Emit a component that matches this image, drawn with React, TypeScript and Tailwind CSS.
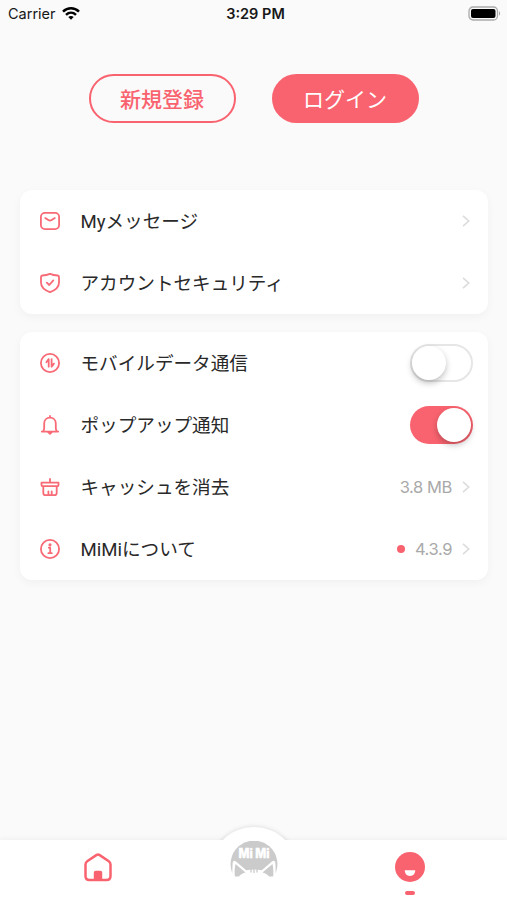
import type { ReactNode } from "react"

function Icon({ children }: { children: ReactNode }) {
  return (
    <svg
      viewBox="0 0 20 20"
      className="h-5 w-5 shrink-0"
      fill="none"
      stroke="#f86a76"
      strokeWidth="1.8"
      strokeLinecap="round"
      strokeLinejoin="round"
    >
      {children}
    </svg>
  )
}

const icons = {
  message: (
    <Icon>
      <rect x="0.9" y="1.9" width="18.2" height="16.2" rx="4" />
      <path d="M5.2 7.1l3.1 2c1.1.7 2.3.7 3.4 0l3.1-2" />
    </Icon>
  ),
  shield: (
    <Icon>
      <path d="M10 0.9C7.2 2 4.3 2.4 2.4 2.5c-.9.1-1.4.6-1.4 1.5v5.6c0 4.7 3.6 7.7 9 9.6 5.4-1.9 9-4.9 9-9.6V4c0-.9-.5-1.4-1.4-1.5C15.7 2.4 12.8 2 10 .9z" />
      <path d="M6.8 9.6l2.5 2.4 4-4.6" />
    </Icon>
  ),
  data: (
    <Icon>
      <circle cx="10" cy="10" r="9.1" />
      <path d="M8.7 6.1v7.6M8.5 6.3L6.4 9.2M11.6 6.1v7.6M11.8 13.5l2.1-2.9" />
    </Icon>
  ),
  bell: (
    <Icon>
      <path d="M10 .9v1.6M1.8 16.6h16.4M3.1 16.3c.8-1.1 1.1-2.1 1.1-3.4V8.6c0-3.5 2.3-5.9 5.8-5.9s5.8 2.4 5.8 5.9v4.3c0 1.3.3 2.3 1.1 3.4" />
      <path d="M8.4 17.4h3.2L10 18.9z" fill="#f86a76" />
    </Icon>
  ),
  clean: (
    <Icon>
      <path d="M10 1.9v3.2M1.5 5.6h17v2.3c0 .8-.5 1.3-1.3 1.3H2.8c-.8 0-1.3-.5-1.3-1.3zM3.3 9.4v6.5c0 1.5.7 2.2 2.2 2.2h9c1.5 0 2.2-.7 2.2-2.2V9.4M8.4 14.3v3.5M11.7 14.3v3.5" />
    </Icon>
  ),
  info: (
    <Icon>
      <circle cx="10" cy="10" r="9.1" />
      <path d="M8.8 8.7h1.4v5.1M8.4 14.2h3.4" />
      <circle cx="10" cy="5.8" r="0.7" fill="#f86a76" />
    </Icon>
  ),
}

function Chevron() {
  return (
    <svg viewBox="0 0 8 12" className="mr-[3px] ml-[10px] h-3 w-2" fill="none" stroke="#dcdcdc" strokeWidth="1.6">
      <path d="M1 .8L6.7 6 1 11.2" />
    </svg>
  )
}

function Toggle({ on = false }: { on?: boolean }) {
  return (
    <span
      className={
        on
          ? "flex h-[38px] w-[63px] items-center justify-end rounded-full bg-[#f9636f] px-0.5"
          : "flex h-[38px] w-[63px] items-center rounded-full border-2 border-[#e6e6e6] bg-white"
      }
    >
      <span className="h-[34px] w-[34px] rounded-full bg-white shadow-[0_3px_6px_rgba(0,0,0,0.25)]" />
    </span>
  )
}

function Row({ icon, label, children }: { icon: ReactNode; label: string; children: ReactNode }) {
  return (
    <div className="flex h-[62px] items-center pr-[15px] pl-5">
      {icon}
      <span className="ml-[20.5px] pt-0.5 font-[Roboto,'Noto_Sans_CJK_JP',sans-serif] text-[18.6px] leading-none whitespace-nowrap text-[#292929]">
        {label}
      </span>
      <div className="ml-auto flex items-center text-[16.5px] leading-none tracking-[-0.4px] text-[#a9a9a9]">
        {children}
      </div>
    </div>
  )
}

function StatusBar() {
  return (
    <div className="grid h-[28px] grid-cols-3 items-center pr-[6px] pl-2 text-[14.5px] leading-none text-[#171717]">
      <div className="flex items-center gap-[6px]">
        <span>Carrier</span>
        <svg viewBox="0 0 18 13" className="-mt-0.5 h-[13px] w-[18px]" fill="none" stroke="#000" strokeWidth="2.5">
          <path d="M1 4.6c4.6-4.4 11.4-4.4 16 0M4 7.8c2.9-2.7 7.1-2.7 10 0" />
          <path d="M6.3 9.9c1.6-1.3 3.8-1.3 5.4 0L9 12.7z" fill="#000" stroke="none" />
        </svg>
      </div>
      <span className="pl-0.5 text-center font-semibold whitespace-nowrap">3:29 PM</span>
      <svg viewBox="0 0 33 15" className="-mt-0.5 h-[15px] w-[33px] justify-self-end">
        <rect x="1" y="1" width="28.5" height="13" rx="4" fill="none" stroke="#aaa" strokeWidth="1.3" />
        <rect x="3" y="3" width="24.5" height="9" rx="2" fill="#000" />
        <path d="M31 5.3c1.5.6 1.5 3.8 0 4.4z" fill="#aaa" />
      </svg>
    </div>
  )
}

function MimiLogo() {
  return (
    <svg viewBox="0 0 48 38" className="mt-px h-[38px] w-12">
      <path d="M4.2 35.5A23.4 23.4 0 1 1 43.8 35.5z" fill="#cbcbcb" />
      <path
        d="M2 38L2.6 22.5c.2-2.8 1.5-3.5 3.7-1.8l9.9 8.5c4.8-1.1 10.8-1.1 15.6 0l9.9-8.5c2.2-1.7 3.5-1 3.7 1.8L46 38z"
        fill="#fff"
      />
      <path
        d="M4.9 35.6c-.5-4.3-.4-8.3.6-12.6l10 8.6c-2.4.6-5 1.9-6.6 4zM43.1 35.6c.5-4.3.4-8.3-.6-12.6l-10 8.6c2.4.6 5 1.9 6.6 4z"
        fill="#cbcbcb"
      />
      <path d="M21 28v3M24 28v3.6M27 28v3" stroke="#cbcbcb" strokeWidth="1.3" strokeLinecap="round" />
      <text
        x="24"
        y="17"
        textAnchor="middle"
        fontSize="12.5"
        fontWeight="800"
        fill="#fff"
        stroke="#fff"
        strokeWidth="0.4"
        textLength="31"
        lengthAdjust="spacingAndGlyphs"
      >
        Mi Mi
      </text>
    </svg>
  )
}

function TabBar() {
  return (
    <nav className="relative mt-auto h-[60px] bg-white shadow-[0_-1px_5px_rgba(0,0,0,0.05)]">
      {/* raised part behind the centre tab */}
      <div className="absolute -top-[18px] left-1/2 h-[18px] w-[100px] -translate-x-1/2 overflow-hidden">
        <div className="mx-auto mt-[5px] h-[88px] w-[88px] rounded-full bg-white shadow-[0_0_5px_rgba(0,0,0,0.14)]" />
      </div>
      <div className="relative grid h-full grid-cols-[196px_116px_1fr] items-start justify-items-center">
        <svg viewBox="0 0 28 29" className="mt-[13px] h-[29px] w-7" fill="none">
          <path
            d="M12.3 2.1L3.2 8.2C1.9 9.1 1.5 10 1.5 11.6V23c0 2.7 1.2 4 3.9 4h17.2c2.7 0 3.9-1.3 3.9-4V11.6c0-1.6-.4-2.5-1.7-3.4l-9.1-6.1c-1.3-.9-2.1-.9-3.4 0z"
            stroke="#f9636f"
            strokeWidth="2.5"
          />
          <path d="M9.8 27v-7.2c0-1.3.7-2 2-2h4.4c1.3 0 2 .7 2 2V27z" fill="#f9636f" />
        </svg>
        <MimiLogo />
        <div className="mt-3 flex flex-col items-center">
          <svg viewBox="0 0 30 30" className="h-[30px] w-[30px]">
            <circle cx="15" cy="15" r="15" fill="#f9636f" />
            <path d="M9.8 18.3h10.4c0 3.4-2 5.7-5.2 5.7s-5.2-2.3-5.2-5.7z" fill="#fff" />
          </svg>
          <span className="mt-[9px] h-1 w-[10px] rounded-full bg-[#f9636f]" />
        </div>
      </div>
    </nav>
  )
}

export default function App() {
  return (
    <div className="flex h-[900px] w-[507px] flex-col overflow-hidden bg-[#fafafa] font-[Inter,'Noto_Sans_CJK_JP',sans-serif]">
      <StatusBar />
      <div className="mt-[46px] flex justify-center gap-9 text-[21px] leading-none">
        <button className="h-[49px] w-[147px] rounded-full border-2 border-[#f9636f] pt-px font-medium text-[#f9636f]">
          新規登録
        </button>
        <button className="h-[49px] w-[147px] rounded-full bg-[#f9636f] pt-px text-white">ログイン</button>
      </div>

      <div className="mt-[67px] mr-[19px] ml-5 flex flex-col gap-[18px]">
        <section className="rounded-xl bg-white shadow-[0_3px_10px_rgba(0,0,0,0.04)]">
          <Row icon={icons.message} label="Myメッセージ">
            <Chevron />
          </Row>
          <Row icon={icons.shield} label="アカウントセキュリティ">
            <Chevron />
          </Row>
        </section>
        <section className="rounded-xl bg-white shadow-[0_3px_10px_rgba(0,0,0,0.04)]">
          <Row icon={icons.data} label="モバイルデータ通信">
            <Toggle />
          </Row>
          <Row icon={icons.bell} label="ポップアップ通知">
            <Toggle on />
          </Row>
          <Row icon={icons.clean} label="キャッシュを消去">
            <span>3.8 MB</span>
            <Chevron />
          </Row>
          <Row icon={icons.info} label="MiMiについて">
            <span className="mr-[10px] h-2 w-2 rounded-full bg-[#f9636f]" />
            <span>4.3.9</span>
            <Chevron />
          </Row>
        </section>
      </div>
      <TabBar />
    </div>
  )
}
